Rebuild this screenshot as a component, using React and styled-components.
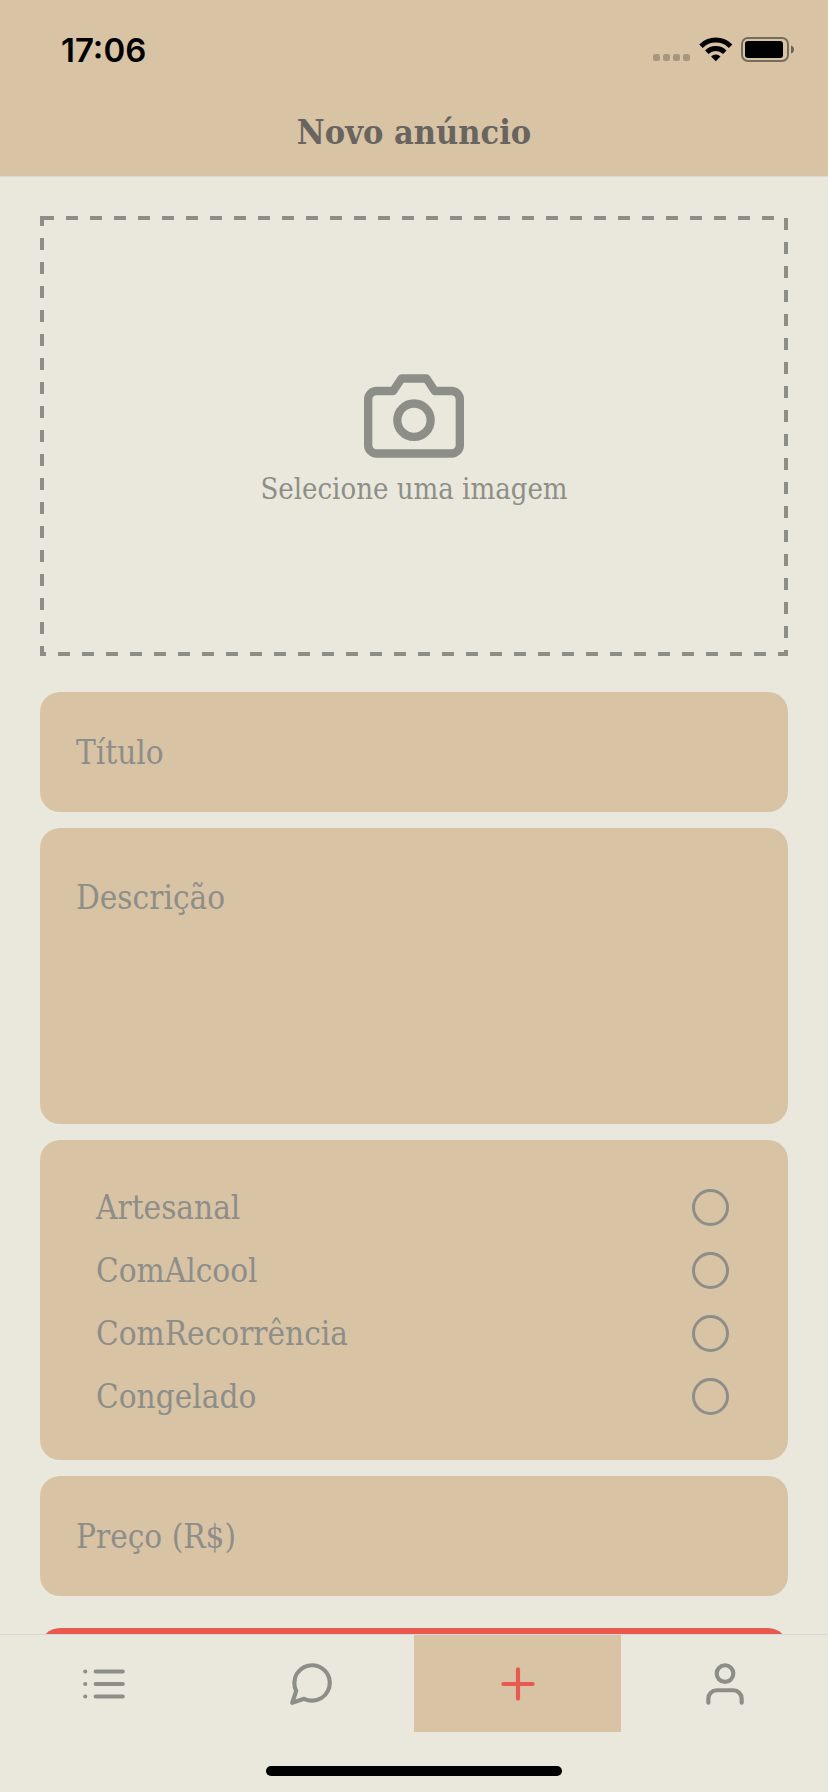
import React from "react";
import styled, { createGlobalStyle, css } from "styled-components";

const color = {
  page: "#eae8dc",
  tan: "#d9c3a5",
  grey: "#8e8e89",
  title: "#68645f",
  red: "#e85a4f",
  line: "#d8d8d8",
};

const slab = '"Roboto Slab", "DejaVu Serif Condensed", "DejaVu Serif", serif';

const GlobalStyle = createGlobalStyle`
  *, *::before, *::after { box-sizing: border-box; }
  html, body, #root { height: 100%; }
  body { margin: 0; background: ${color.page}; font-family: ${slab}; }
  button, input, textarea { font-family: inherit; }
`;

const Screen = styled.div`
  display: flex;
  flex-direction: column;
  height: 100%;
  background: ${color.page};
`;

const Header = styled.header`
  flex: none;
  background: ${color.tan};
  border-bottom: 1px solid ${color.line};
`;

const StatusBar = styled.div`
  display: flex;
  align-items: center;
  justify-content: space-between;
  height: 88px;
  padding: 12px 34px 0 61px;
`;

const Clock = styled.time`
  font: 600 33px/40px Inter, sans-serif;
  color: #000;
`;

const StatusIcons = styled.svg`
  display: block;
  width: 142px;
  height: 26px;
`;

const Title = styled.h1`
  margin: 0;
  height: 88px;
  font-size: 34px;
  font-weight: 600;
  line-height: 88px;
  text-align: center;
  color: ${color.title};
`;

const Content = styled.main`
  flex: 1;
  min-height: 0;
  overflow: hidden;
  padding: 39px 40px 0;
`;

const Form = styled.form`
  display: flex;
  flex-direction: column;
  gap: 16px;
`;

const PhotoPicker = styled.button`
  position: relative;
  display: flex;
  flex-direction: column;
  align-items: center;
  justify-content: center;
  gap: 6px;
  height: 440px;
  margin-bottom: 20px;
  padding: 0;
  border: 0;
  background: transparent;
  color: ${color.grey};
  font-size: 29px;
  line-height: 34px;
`;

const DashedFrame = styled.svg`
  position: absolute;
  inset: 0;
  width: 100%;
  height: 100%;

  rect {
    width: calc(100% - 4px);
    height: calc(100% - 4px);
    fill: none;
    stroke: currentColor;
    stroke-width: 4px;
    stroke-dasharray: 12px 12px;
  }
`;

const fieldStyle = css`
  display: block;
  width: 100%;
  border: 0;
  border-radius: 20px;
  background: ${color.tan};
  color: ${color.title};
  font-size: 33px;
  line-height: 42px;
  outline: none;

  &::placeholder {
    color: ${color.grey};
    opacity: 1;
  }
`;

const TextField = styled.input`
  ${fieldStyle}
  height: 120px;
  padding: 0 36px;
`;

const TextArea = styled.textarea`
  ${fieldStyle}
  height: 296px;
  padding: 49px 36px;
  resize: none;
`;

const Options = styled.div`
  padding: 36px 59px 32px 56px;
  border-radius: 20px;
  background: ${color.tan};
`;

const OptionRow = styled.label`
  display: flex;
  align-items: center;
  justify-content: space-between;
  height: 63px;
  color: ${color.grey};
  font-size: 33px;
  line-height: 42px;
`;

const RoundCheck = styled.input`
  appearance: none;
  width: 37px;
  height: 37px;
  margin: 0;
  border: 3px solid ${color.grey};
  border-radius: 50%;

  &:checked {
    background: ${color.grey};
  }
`;

const Submit = styled.button`
  height: 120px;
  margin-top: 16px;
  border: 0;
  border-radius: 20px;
  background: ${color.red};
`;

const Footer = styled.footer`
  flex: none;
  border-top: 1px solid ${color.line};
  background: ${color.page};
`;

const Tabs = styled.nav`
  display: grid;
  grid-template-columns: repeat(4, 1fr);
`;

const Tab = styled.a`
  display: flex;
  align-items: center;
  justify-content: center;
  height: 97px;
  background: ${(p) => (p.$active ? color.tan : "transparent")};
  color: ${(p) => (p.$active ? color.red : color.grey)};
`;

const HomeIndicator = styled.div`
  width: 296px;
  height: 10px;
  margin: 34px auto 16px;
  border-radius: 5px;
  background: #000;
`;

const Icon = ({ size = 50, children }) => (
  <svg
    width={size}
    height={size}
    viewBox="0 0 24 24"
    fill="none"
    stroke="currentColor"
    strokeWidth="2"
    strokeLinecap="round"
    strokeLinejoin="round"
    aria-hidden="true"
  >
    {children}
  </svg>
);

const tabs = [
  { name: "Lista", icon: <path d="M8 6h13M8 12h13M8 18h13M3 6h.01M3 12h.01M3 18h.01" /> },
  {
    name: "Mensagens",
    icon: <path d="M21 11.5a8.38 8.38 0 0 1-.9 3.8 8.5 8.5 0 0 1-7.6 4.7 8.38 8.38 0 0 1-3.8-.9L3 21l1.9-5.7a8.38 8.38 0 0 1-.9-3.8 8.5 8.5 0 0 1 4.7-7.6 8.38 8.38 0 0 1 3.8-.9h.5a8.48 8.48 0 0 1 8 8v.5z" />,
  },
  { name: "Novo", active: true, icon: <path d="M12 5v14M5 12h14" /> },
  {
    name: "Perfil",
    icon: (
      <>
        <path d="M20 21v-2a4 4 0 0 0-4-4H8a4 4 0 0 0-4 4v2" />
        <circle cx="12" cy="7" r="4" />
      </>
    ),
  },
];

const options = ["Artesanal", "ComAlcool", "ComRecorrência", "Congelado"];

export default function App() {
  return (
    <Screen>
      <GlobalStyle />
      <Header>
        <StatusBar>
          <Clock>17:06</Clock>
          <StatusIcons viewBox="0 0 142 26" aria-hidden="true">
            <g fill="#000" opacity="0.22">
              <rect x="1" y="17" width="7" height="7" rx="2" />
              <rect x="11" y="17" width="7" height="7" rx="2" />
              <rect x="21" y="17" width="7" height="7" rx="2" />
              <rect x="31" y="17" width="7" height="7" rx="2" />
            </g>
            <g fill="none" stroke="#000" strokeWidth="5">
              <path d="M49 9.2a21 21 0 0 1 29.600 0" />
              <path d="M54.800 15.200a12.800 12.800 0 0 1 18 0" />
            </g>
            <path d="M59.100 19.500a6.700 6.700 0 0 1 9.400 0L63.800 24.300z" />
            <rect x="90" y="1" width="46" height="23" rx="6" fill="none" stroke="#000" strokeOpacity="0.45" strokeWidth="2" />
            <rect x="93" y="4" width="38" height="17" rx="3" />
            <path d="M139 8.500q3 1 3 4t-3 4z" opacity="0.5" />
          </StatusIcons>
        </StatusBar>
        <Title>Novo anúncio</Title>
      </Header>

      <Content>
        <Form>
          <PhotoPicker type="button">
            <DashedFrame aria-hidden="true">
              <rect x="2" y="2" />
            </DashedFrame>
            <Icon size={100}>
              <path d="M23 19a2 2 0 0 1-2 2H3a2 2 0 0 1-2-2V8a2 2 0 0 1 2-2h4l2-3h6l2 3h4a2 2 0 0 1 2 2z" />
              <circle cx="12" cy="13" r="4" />
            </Icon>
            <span>Selecione uma imagem</span>
          </PhotoPicker>
          <TextField placeholder="Título" aria-label="Título" />
          <TextArea placeholder="Descrição" aria-label="Descrição" />
          <Options>
            {options.map((name) => (
              <OptionRow key={name}>
                {name}
                <RoundCheck type="checkbox" />
              </OptionRow>
            ))}
          </Options>
          <TextField placeholder="Preço (R$)" aria-label="Preço (R$)" />
          <Submit type="submit" aria-label="Publicar" />
        </Form>
      </Content>

      <Footer>
        <Tabs>
          {tabs.map((t) => (
            <Tab key={t.name} href="#" aria-label={t.name} $active={t.active}>
              <Icon>{t.icon}</Icon>
            </Tab>
          ))}
        </Tabs>
        <HomeIndicator />
      </Footer>
    </Screen>
  );
}
